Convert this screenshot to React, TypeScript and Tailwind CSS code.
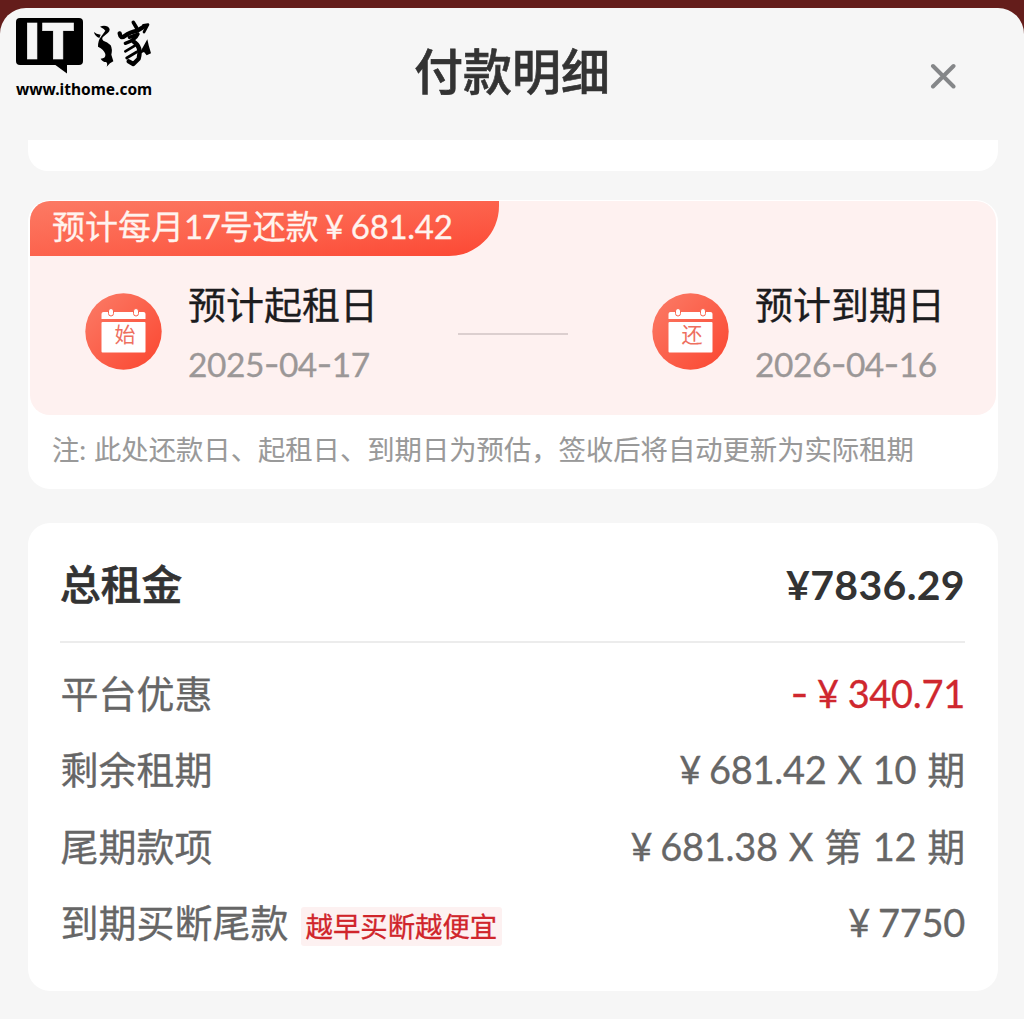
import React from "react";

const cjk = "font-['Lato','Noto_Sans_CJK_SC',sans-serif]";

function Yen({ className = "" }: { className?: string }) {
  return <span className={`${className}`}>¥</span>;
}

function Logo() {
  return (
    <div className="absolute left-[16px] top-[10px] w-[144px] text-black">
      <div className="flex h-[56px]">
        <div className="relative h-[47px] w-[67px] shrink-0 rounded-[4px] bg-black">
          <span className="absolute left-[9px] top-0 font-['Inter',sans-serif] text-[49px] font-black leading-[47px] tracking-[2px] text-[#f6f6f6] [-webkit-text-stroke:0.500px]">IT</span>
          <svg className="absolute left-[38px] top-[46px]" width="14" height="10" viewBox="0 0 14 10"><path d="M0 0H13V9.500Z" fill="#000" /></svg>
        </div>
        <svg className="ml-[5px] mt-[-4px] shrink-0" width="70" height="60" viewBox="0 0 210 180" fill="none" stroke="#000" strokeLinecap="round" strokeLinejoin="round">
          <path fill="#000" stroke="none" d="M18 54Q24 60 38 62L34 72Q20 66 18 54ZM36 38Q48 32 60 38Q70 46 60 56L44 70Q40 76 46 80Q58 84 68 94Q74 106 70 122L76 142Q66 146 56 158Q60 148 54 144Q44 144 38 134Q54 134 52 120Q48 106 30 98Q30 80 38 70L52 50Q48 44 36 38Z" />
          <path d="M136 25L146 42" strokeWidth="11" />
          <path d="M95 58Q98 76 110 66Q126 54 148 50L168 38" strokeWidth="13" />
          <path d="M166 34L180 32L168 54" strokeWidth="8" />
          <path d="M124 70L150 60Q142 78 112 88" strokeWidth="10" />
          <path d="M136 82Q162 98 152 134L136 150L122 142" strokeWidth="13" />
          <path d="M142 94L112 112M146 114L116 132" strokeWidth="8" />
          <path fill="#000" stroke="none" d="M158 112L178 76L182 94L189 118L176 124L168 114L154 120Z" />
        </svg>
      </div>
      <div className="mt-[2px] font-['Noto_Sans',sans-serif] text-[15.500px] font-bold leading-[26px]">www.ithome.com</div>
    </div>
  );
}

function DateIcon({ id, label }: { id: string; label: string }) {
  return (
    <svg className="shrink-0" width="77" height="77" viewBox="0 0 77 77">
      <defs>
        <linearGradient id={id} x1="0" y1="0" x2="1" y2="1">
          <stop offset="0.1" stopColor="#fb7762" />
          <stop offset="0.9" stopColor="#fb4b35" />
        </linearGradient>
      </defs>
      <circle cx="38.500" cy="38.500" r="38.200" fill={`url(#${id})`} />
      <path d="M16.500 26V21Q16.500 19 18.500 19H58.500Q60.500 19 60.500 21V26Z" fill="#fff" />
      <rect x="16.500" y="29" width="44" height="30.500" rx="1" fill="#fff" />
      <rect x="23.500" y="15.500" width="5" height="7.500" rx="2.500" fill="#fff" stroke="#f9654f" strokeWidth="1" />
      <rect x="48.500" y="15.500" width="5" height="7.500" rx="2.500" fill="#fff" stroke="#f9654f" strokeWidth="1" />
      <text x="40" y="49" textAnchor="middle" fontSize="21" fill="#ee705f" fontFamily="'Noto Sans CJK SC', sans-serif">{label}</text>
    </svg>
  );
}

function DateItem({ id, icon, label, parts }: { id: string; icon: string; label: string; parts: string[] }) {
  return (
    <div className="flex">
      <div className="mt-[10px]"><DateIcon id={id} label={icon} /></div>
      <div className="ml-[26px] w-[200px] whitespace-nowrap">
        <div className="mt-[-1px] text-[38px] leading-[44px] text-[#1c1c1e]">{label}</div>
        <div className="mt-[17px] flex text-[33.500px] leading-[42px] tracking-[-0.450px] text-[#9b9797]">
          {parts.map((p, i) => (
            <React.Fragment key={i}>
              {i > 0 && <span className="font-['Inter',sans-serif]">-</span>}
              <span>{p}</span>
            </React.Fragment>
          ))}
        </div>
      </div>
    </div>
  );
}

function Row({ label, tag, children }: { label: string; tag?: string; children: React.ReactNode }) {
  return (
    <div className="flex h-[76.500px] items-center justify-between whitespace-nowrap text-[38px] leading-[48px] text-[#666]">
      <div className="flex items-center">
        <span className="pl-[0.500px]">{label}</span>
        {tag && <span className="ml-[12px] mt-[9px] h-[39px] rounded-[3px] bg-[#fdf1f1] px-[5px] text-[27.400px] leading-[39px] text-[#d0252b]">{tag}</span>}
      </div>
      <div className="flex tracking-[-0.300px]">{children}</div>
    </div>
  );
}

export default function App() {
  return (
    <div className={`h-[1019px] w-[1024px] overflow-hidden bg-[#641d1b] pt-[8px] ${cjk}`}>
      <div className="relative h-[1011px] rounded-t-[26px] bg-[#f6f6f6]">
        <Logo />
        <header className="flex h-[132px] items-center justify-center pb-[6px] text-[49px] font-medium leading-[60px] text-[#333] [-webkit-text-stroke:0.600px]">付款明细</header>
        <svg className="absolute left-[930px] top-[55px]" width="26" height="26" viewBox="0 0 26 26" stroke="#858789" strokeWidth="4" strokeLinecap="round"><path d="M3 3L23.500 23.500M23.500 3L3 23.500" /></svg>
        <main className="ml-[28px] w-[970px] [-webkit-text-stroke:0.300px]">
          <div className="h-[31px] rounded-b-[20px] bg-white" />
          <section className="mt-[29px] h-[289px] rounded-[22px] bg-white px-[2px] pt-px">
            <div className="h-[214px] overflow-hidden rounded-[20px] bg-[#fef1f0]">
              <div className="flex h-[55px] w-[469px] items-center whitespace-nowrap rounded-br-[50px] bg-linear-to-br from-[#fc7a64] to-[#fc4733] pb-[5px] pl-[22px] text-[33px] leading-[44px] text-[#fff3ee]">
                <span>预计每月</span><span className="tracking-[-1.300px]">17</span><span>号还款</span><Yen className="ml-[6px] mr-[7px]" /><span className="tracking-[-0.300px]">681.42</span>
              </div>
              <div className="flex pl-[55px] pt-[27px]">
                <DateItem id="start" icon="始" label="预计起租日" parts={["2025", "04", "17"]} />
                <div className="ml-[70px] mt-[50px] h-[2px] w-[110px] bg-[#dccfcf]" />
                <div className="ml-[84px]"><DateItem id="end" icon="还" label="预计到期日" parts={["2026", "04", "16"]} /></div>
              </div>
            </div>
            <p className="mt-[15px] flex whitespace-nowrap pl-[22px] text-[27.330px] leading-[40px] text-[#999] [-webkit-text-stroke:0.100px]"><span className="w-[42px]">注:</span><span>此处还款日、起租日、到期日为预估，签收后将自动更新为实际租期</span></p>
          </section>
          <section className="mt-[34px] h-[468px] rounded-[22px] bg-white pl-[32px] pr-[33px]">
            <div className="flex h-[120px] items-center justify-between border-b-2 border-[#ececec] pt-[5px] text-[40.700px] font-medium leading-[50px] text-[#333]">
              <span className="[-webkit-text-stroke:0.700px]">总租金</span><span className="text-[41px] font-bold tracking-[0.350px] [-webkit-text-stroke:0px]">¥7836.29</span>
            </div>
            <div className="pt-[11.500px]">
              <Row label="平台优惠"><span className="flex text-[#cf272e]"><span className="font-['Inter',sans-serif]">-</span><Yen className="ml-[9px] mr-[9px]" />340.71</span></Row>
              <Row label="剩余租期"><Yen className="mr-[8px]" /><span>681.42</span><span className="mx-[11px]">X</span><span className="mr-[11px]">10</span><span>期</span></Row>
              <Row label="尾期款项"><Yen className="mr-[8px]" /><span>681.38</span><span className="mx-[11px]">X</span><span className="mr-[11px]">第</span><span className="mr-[11px]">12</span><span>期</span></Row>
              <Row label="到期买断尾款" tag="越早买断越便宜"><Yen className="mr-[8px]" /><span>7750</span></Row>
            </div>
          </section>
        </main>
      </div>
    </div>
  );
}
